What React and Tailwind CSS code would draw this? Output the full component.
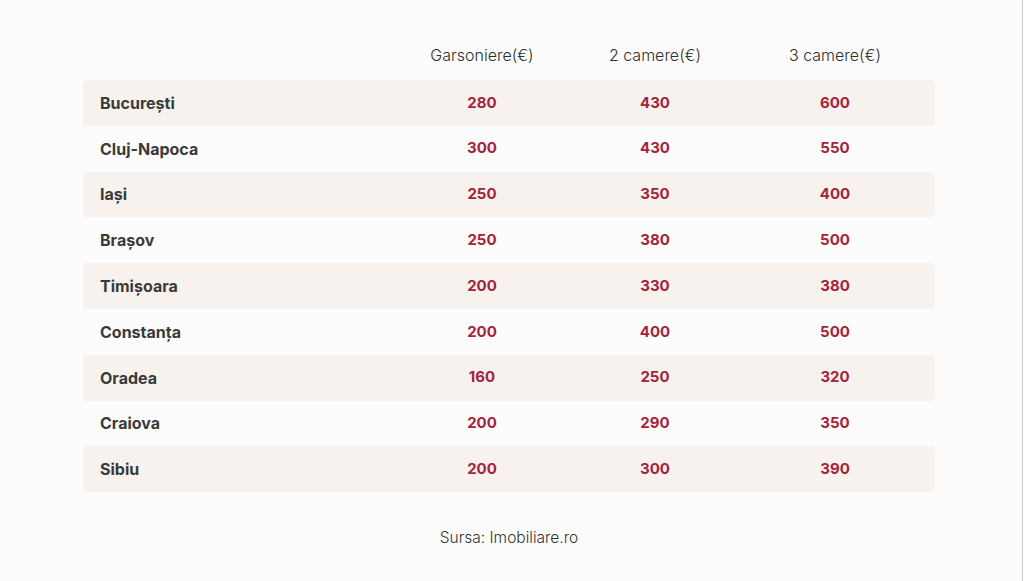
import React from 'react';

const rows = [
  { city: 'București', g: 280, c2: 430, c3: 600 },
  { city: 'Cluj-Napoca', g: 300, c2: 430, c3: 550 },
  { city: 'Iași', g: 250, c2: 350, c3: 400 },
  { city: 'Brașov', g: 250, c2: 380, c3: 500 },
  { city: 'Timișoara', g: 200, c2: 330, c3: 380 },
  { city: 'Constanța', g: 200, c2: 400, c3: 500 },
  { city: 'Oradea', g: 160, c2: 250, c3: 320 },
  { city: 'Craiova', g: 200, c2: 290, c3: 350 },
  { city: 'Sibiu', g: 200, c2: 300, c3: 390 },
];

const cols = 'grid grid-cols-[312px_174px_172px_188px_6px]';

const App = () => {
  return (
    <div className="flex h-[581px] w-[1024px] bg-[#fcfcfc] font-['Inter',sans-serif]">
      <div className="flex-1 pl-[83px] pt-[40px]">
        <div className="w-[852px]">
          {/* Header */}
          <div className={`${cols} h-[30px] items-center text-[16px] font-light text-[#2e2e2e]`}>
            <div />
            <div className="text-center">Garsoniere(€)</div>
            <div className="text-center">2 camere(€)</div>
            <div className="text-center">3 camere(€)</div>
          </div>

          {/* Rows */}
          <div className="mt-[10px] flex flex-col">
            {rows.map((r, i) => (
              <div
                key={r.city}
                className={`${cols} h-[45.8px] items-center rounded-[4px] ${i % 2 === 0 ? 'bg-[#f7f2ee]' : ''}`}
              >
                <div className="pl-[17px] text-[16px] font-bold text-[#3a3a3a]">{r.city}</div>
                <div className="text-center text-[15px] font-bold text-[#a3243a]">{r.g}</div>
                <div className="text-center text-[15px] font-bold text-[#a3243a]">{r.c2}</div>
                <div className="text-center text-[15px] font-bold text-[#a3243a]">{r.c3}</div>
              </div>
            ))}
          </div>

          {/* Source */}
          <p className="mt-[34px] text-center text-[15.5px] font-light text-[#333]">
            Sursa: Imobiliare.ro
          </p>
        </div>
      </div>
      <div className="w-px bg-[#c9c9c9]" />
      <div className="w-px bg-white" />
    </div>
  );
};

export default App;
